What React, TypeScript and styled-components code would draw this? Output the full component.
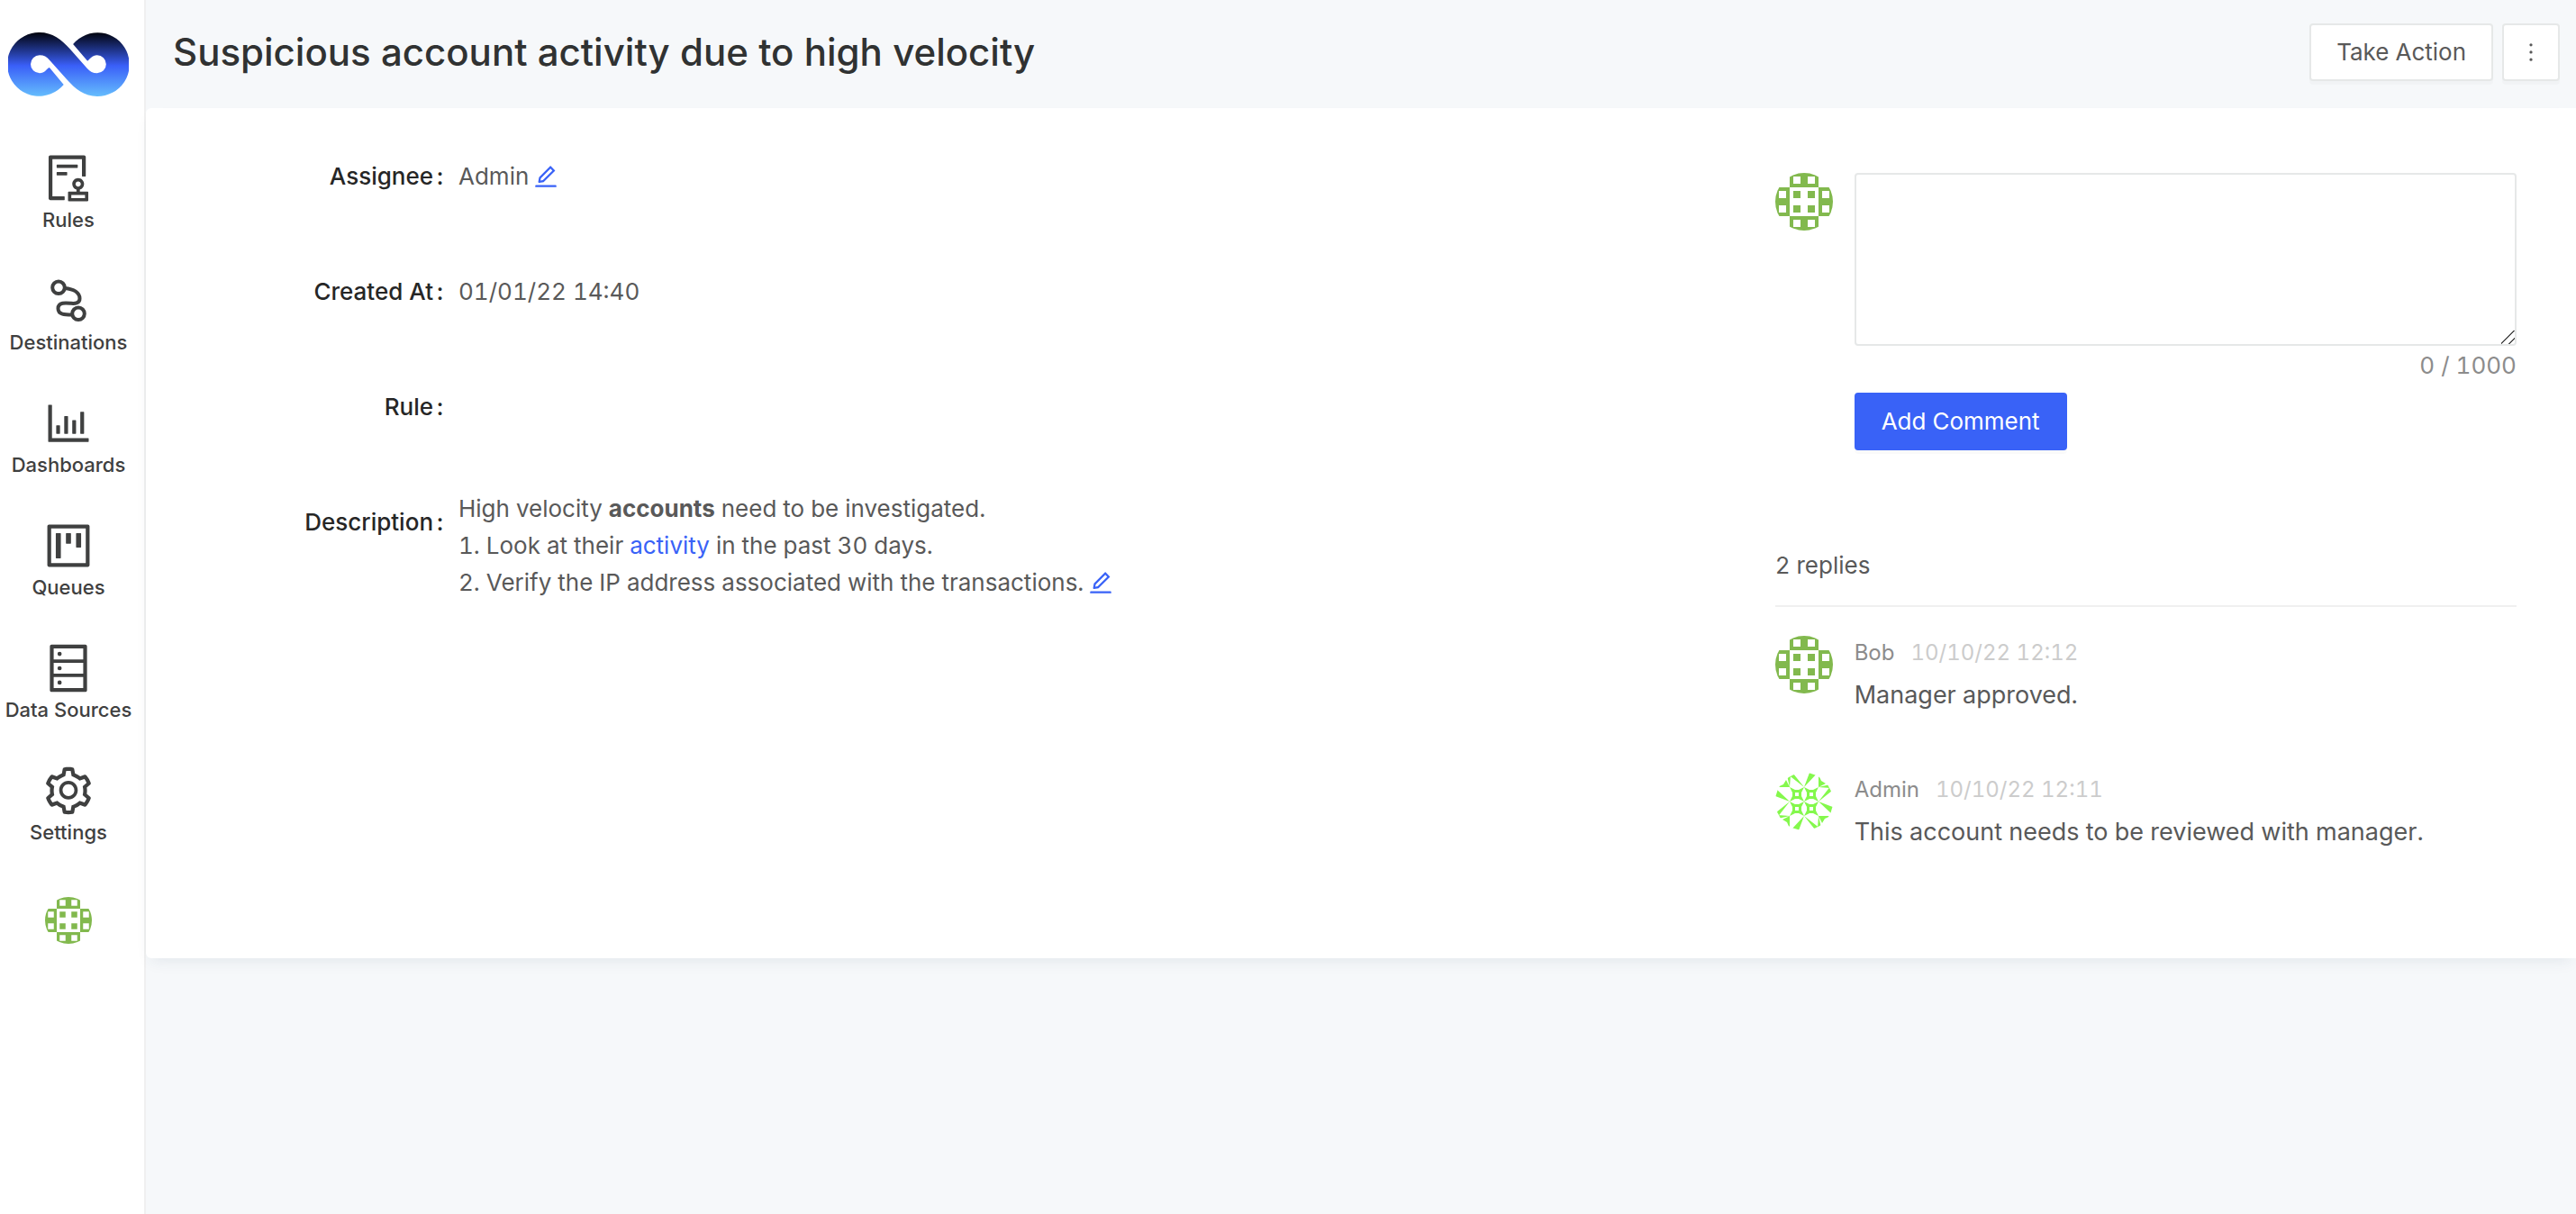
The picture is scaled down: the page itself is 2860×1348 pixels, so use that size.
import React, { useState } from "react";
import styled, { createGlobalStyle } from "styled-components";
import {
  AiOutlineAudit,
  AiOutlineBarChart,
  AiOutlineDatabase,
  AiOutlineEdit,
  AiOutlineMore,
  AiOutlineProject,
  AiOutlineSetting,
} from "react-icons/ai";

const color = {
  primary: "#3962f7",
  page: "#f6f8fa",
  border: "#e6e8e8",
  line: "#f0f0f0",
  heading: "#303232",
  label: "#262626",
  text: "#595959",
  muted: "#8c8c8c",
  faint: "#cccccc",
  nav: "#3f4040",
};

const GlobalStyle = createGlobalStyle`
  *, *::before, *::after { box-sizing: border-box; }
  body {
    margin: 0;
    background: ${color.page};
    color: ${color.text};
    font-family: Inter, "Noto Sans", sans-serif;
    font-size: 26px;
    font-variant-numeric: tabular-nums;
    line-height: 40px;
  }
  button, textarea { font: inherit; }
  a { color: ${color.primary}; text-decoration: none; }
`;

const Shell = styled.div`
  display: flex;
  min-height: 100vh;
`;

const Sidebar = styled.aside`
  flex: none;
  display: flex;
  flex-direction: column;
  align-items: center;
  width: 162px;
  padding: 36px 8px 0 0;
  background: #fff;
  border-right: 2px solid ${color.line};
`;

const NavList = styled.nav`
  display: flex;
  flex-direction: column;
  gap: 44px;
  margin: 60px 0 56px;
`;

const NavLink = styled.a`
  display: flex;
  flex-direction: column;
  align-items: center;
  color: ${color.nav};
  font-size: 22px;
  font-weight: 500;
  line-height: 32px;
  white-space: nowrap;
`;

const Main = styled.main`
  flex: 1;
  min-width: 0;
`;

const Header = styled.header`
  display: flex;
  align-items: center;
  justify-content: space-between;
  height: 120px;
  padding: 0 18px 4px 30px;
`;

const Title = styled.h1`
  margin: 0;
  color: ${color.heading};
  font-size: 42px;
  font-weight: 500;
  line-height: 56px;
`;

const Actions = styled.div`
  display: flex;
  gap: 10px;
`;

const Button = styled.button<{ $primary?: boolean; $square?: boolean }>`
  display: inline-flex;
  align-items: center;
  justify-content: center;
  height: 64px;
  min-width: 64px;
  padding: ${(p) => (p.$square ? "0" : "0 28px")};
  border: 2px solid ${(p) => (p.$primary ? color.primary : color.border)};
  border-radius: 4px;
  background: ${(p) => (p.$primary ? color.primary : "#fff")};
  color: ${(p) => (p.$primary ? "#fff" : color.text)};
  box-shadow: 0 4px 0 rgba(0, 0, 0, 0.02);
  cursor: pointer;
`;

const Panel = styled.section`
  display: grid;
  grid-template-columns: 2fr 1fr;
  gap: 96px;
  padding: 36px 66px 118px;
  background: #fff;
  border-radius: 6px 0 0 6px;
  box-shadow: 0 8px 16px -6px rgba(40, 70, 100, 0.1);
`;

const Details = styled.dl`
  display: flex;
  flex-direction: column;
  gap: 48px;
  margin: 0;
`;

const Detail = styled.div`
  display: grid;
  grid-template-columns: 264px 1fr;
  gap: 17px;
  min-height: 80px;
`;

const Term = styled.dt`
  color: ${color.label};
  font-weight: 500;
  line-height: 80px;
  text-align: right;
  &::after {
    content: ":";
    margin-left: 4px;
  }
`;

const Value = styled.dd`
  display: flex;
  align-items: center;
  gap: 4px;
  margin: 0;
`;

const Description = styled.dd`
  margin: 0;
  padding-top: 4px;
  line-height: 41px;
`;

const Line = styled.p`
  margin: 0;
`;

const EditableLine = styled(Line)`
  display: flex;
  align-items: center;
  gap: 4px;
`;

const IconButton = styled.button`
  display: inline-flex;
  padding: 0;
  border: 0;
  background: none;
  color: ${color.primary};
  cursor: pointer;
`;

const Discussion = styled.div`
  padding-top: 36px;
`;

const Entry = styled.article`
  display: flex;
  align-items: flex-start;
  gap: 24px;
  & + & { margin-top: 64px; }
`;

const EntryBody = styled.div`
  flex: 1;
  min-width: 0;
`;

const CommentBox = styled.textarea`
  display: block;
  width: 100%;
  height: 192px;
  padding: 8px 22px;
  border: 2px solid ${color.border};
  border-radius: 4px;
  background: #fff;
  color: ${color.text};
  resize: vertical;
  &::-webkit-resizer {
    background: linear-gradient(
      135deg,
      transparent 46%,
      #555 46%,
      #555 53%,
      transparent 53%,
      transparent 76%,
      #555 76%,
      #555 83%,
      transparent 83%
    );
  }
`;

const Counter = styled.div`
  margin-bottom: 8px;
  color: ${color.muted};
  line-height: 44px;
  text-align: right;
`;

const RepliesHeading = styled.h2`
  margin: 108px 0 32px;
  padding-bottom: 24px;
  border-bottom: 2px solid ${color.line};
  font-size: 26px;
  font-weight: 400;
  line-height: 40px;
`;

const Byline = styled.div`
  display: flex;
  gap: 18px;
  color: ${color.muted};
  font-size: 24px;
  line-height: 38px;
  time { color: ${color.faint}; }
`;

const CommentText = styled.p`
  margin: 6px 0 0;
  font-size: 27px;
  line-height: 44px;
`;

const Drawing = styled.svg`
  display: block;
  flex: none;
`;

function Logo() {
  return (
    <Drawing width="134" height="72" viewBox="9 36 134 72" role="img" aria-label="Home">
      <defs>
        <linearGradient id="logo" x1="0" y1="0" x2="0" y2="1">
          <stop offset="0" stopColor="#01030c" />
          <stop offset="0.52" stopColor="#3a5ff8" />
          <stop offset="1" stopColor="#65bdfd" />
        </linearGradient>
      </defs>
      <path
        fill="url(#logo)"
        d="M70.7 94A35.4 35.4 0 1 1 44 36C58 36 68.500 44 77.800 54.600L96.800 75.900C100 79.500 103 81.300 107.800 81.300A10 10 0 0 0 107.800 61.300C102.500 61.300 99.500 66 97.500 67.500Q97 67.500 96.500 67L81.100 49A35.400 35.400 0 1 1 107.800 107C93.800 107 83.300 98.600 74 88L55 66.700C51.800 63.100 48.800 61.300 44 61.300A10 10 0 0 0 44 81.300C49.300 81.300 52.300 76.600 54.300 75.100Q54.800 75.100 55.300 75.600Z"
      />
    </Drawing>
  );
}

function RouteIcon() {
  return (
    <Drawing width="60" height="60" viewBox="0 0 60 60" fill="none" stroke="currentColor" strokeWidth="4">
      <circle cx="19" cy="15.300" r="6.800" />
      <circle cx="41" cy="44.300" r="6.800" />
      <path d="M26 16C36 17 42.500 21 42.500 27.500C42.500 32.500 38 33.200 33 32.800C28 32.300 18.500 31 18.500 38.500C18.500 45.500 26 45.500 34 45.500" />
    </Drawing>
  );
}

function Mosaic({ size }: { size: number }) {
  const edge = [[1, 0], [2, 0], [0, 1], [0, 2], [3, 1], [3, 2], [1, 3], [2, 3]];
  const inner = [[1, 1], [2, 1], [1, 2], [2, 2]];
  return (
    <Drawing width={size} height={size} viewBox="0 0 64 64" aria-hidden="true">
      <clipPath id={"disc" + size}>
        <circle cx="32" cy="32" r="32" />
      </clipPath>
      <g clipPath={`url(#disc${size})`} fill="#82b94e">
        {edge.map(([x, y]) => (
          <path
            key={`${x}${y}`}
            fillRule="evenodd"
            d={`M${x * 16} ${y * 16}h16v16h-16zM${x * 16 + 4} ${y * 16 + 4}v8h8v-8z`}
          />
        ))}
        {inner.map(([x, y]) => (
          <rect key={`${x}${y}`} x={x * 16 + 4} y={y * 16 + 4} width="8" height="8" />
        ))}
      </g>
    </Drawing>
  );
}

function Pinwheel() {
  return (
    <Drawing width="64" height="64" viewBox="0 0 64 64" aria-hidden="true">
      <clipPath id="pinwheel">
        <circle cx="32" cy="32" r="32" />
      </clipPath>
      <g clipPath="url(#pinwheel)" fill="#84f84c">
        {[0, 90, 180, 270].map((a) => (
          <g key={a} transform={`rotate(${a} 32 32)`}>
            <path d="M32 16L38 0H47ZM32 16L14 2L20 1ZM16 16L13 3L17 3ZM2 16H16L12 8L9 13Z" />
            <path
              fillRule="evenodd"
              d="M16 16L22 19H26L32 16L29 22V26L32 32L26 29H22L16 32L19 26V22ZM22 22V26H26V22Z"
            />
          </g>
        ))}
      </g>
    </Drawing>
  );
}

const navigation = [
  { label: "Rules", icon: <AiOutlineAudit size={60} /> },
  { label: "Destinations", icon: <RouteIcon /> },
  { label: "Dashboards", icon: <AiOutlineBarChart size={60} /> },
  { label: "Queues", icon: <AiOutlineProject size={60} /> },
  { label: "Data Sources", icon: <AiOutlineDatabase size={60} /> },
  { label: "Settings", icon: <AiOutlineSetting size={60} /> },
];

const replies = [
  { author: "Bob", at: "10/10/22 12:12", text: "Manager approved.", avatar: <Mosaic size={64} /> },
  {
    author: "Admin",
    at: "10/10/22 12:11",
    text: "This account needs to be reviewed with manager.",
    avatar: <Pinwheel />,
  },
];

export default function App() {
  const [draft, setDraft] = useState("");
  return (
    <>
      <GlobalStyle />
      <Shell>
        <Sidebar>
          <Logo />
          <NavList>
            {navigation.map((item) => (
              <NavLink key={item.label} href="#">
                {item.icon}
                {item.label}
              </NavLink>
            ))}
          </NavList>
          <Mosaic size={52} />
        </Sidebar>
        <Main>
          <Header>
            <Title>Suspicious account activity due to high velocity</Title>
            <Actions>
              <Button type="button">Take Action</Button>
              <Button type="button" $square aria-label="More">
                <AiOutlineMore size={30} />
              </Button>
            </Actions>
          </Header>
          <Panel>
            <Details>
              <Detail>
                <Term>Assignee</Term>
                <Value>
                  Admin
                  <IconButton type="button" aria-label="Edit assignee">
                    <AiOutlineEdit size={30} />
                  </IconButton>
                </Value>
              </Detail>
              <Detail>
                <Term>Created At</Term>
                <Value>01/01/22 14:40</Value>
              </Detail>
              <Detail>
                <Term>Rule</Term>
                <Value />
              </Detail>
              <Detail>
                <Term>Description</Term>
                <Description>
                  <Line>
                    High velocity <strong>accounts</strong> need to be investigated.
                  </Line>
                  <Line>
                    1. Look at their <a href="#activity">activity</a> in the past 30 days.
                  </Line>
                  <EditableLine>
                    2. Verify the IP address associated with the transactions.
                    <IconButton type="button" aria-label="Edit description">
                      <AiOutlineEdit size={30} />
                    </IconButton>
                  </EditableLine>
                </Description>
              </Detail>
            </Details>
            <Discussion>
              <Entry>
                <Mosaic size={64} />
                <EntryBody>
                  <CommentBox
                    aria-label="Comment"
                    maxLength={1000}
                    value={draft}
                    onChange={(e) => setDraft(e.target.value)}
                  />
                  <Counter>{draft.length} / 1000</Counter>
                  <Button type="button" $primary>
                    Add Comment
                  </Button>
                </EntryBody>
              </Entry>
              <RepliesHeading>2 replies</RepliesHeading>
              {replies.map((reply) => (
                <Entry key={reply.author}>
                  {reply.avatar}
                  <EntryBody>
                    <Byline>
                      <span>{reply.author}</span>
                      <time>{reply.at}</time>
                    </Byline>
                    <CommentText>{reply.text}</CommentText>
                  </EntryBody>
                </Entry>
              ))}
            </Discussion>
          </Panel>
        </Main>
      </Shell>
    </>
  );
}
